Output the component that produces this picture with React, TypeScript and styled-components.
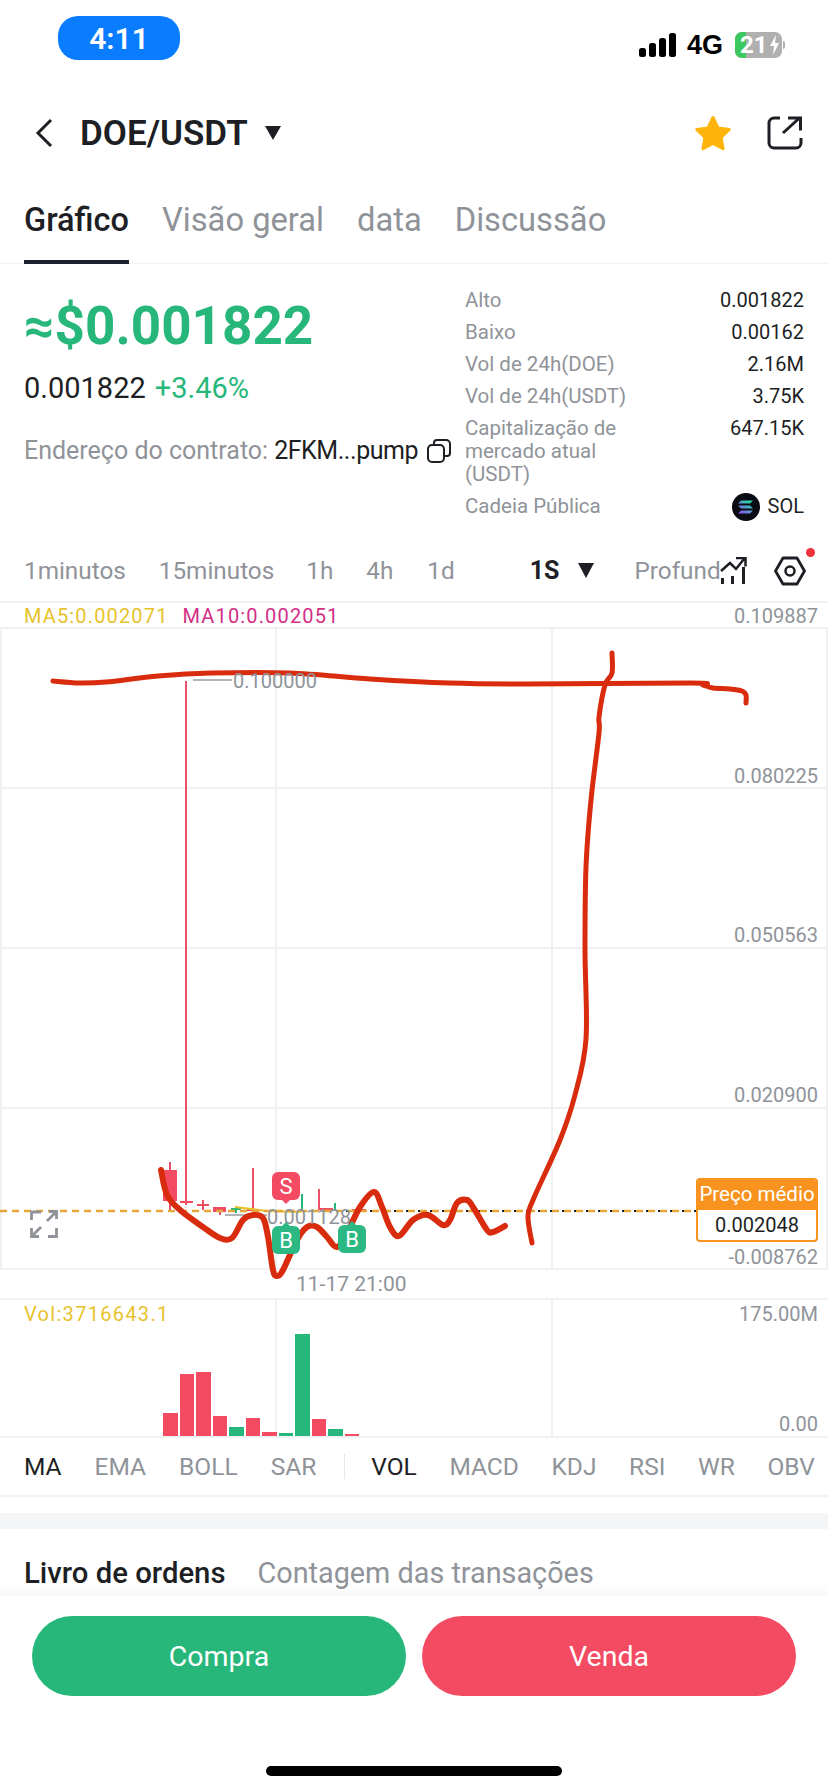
import styled, { createGlobalStyle } from "styled-components";

const GREEN = "#27b77b";
const RED = "#f34b62";
const GRAY = "#8f9399";
const INK = "#1d1f24";
const SANS = `Roboto, "Noto Sans", sans-serif`;

const GlobalStyle = createGlobalStyle`
  html, body {
    margin: 0;
    padding: 0;
    background: #fff;
  }
  body {
    font-family: ${SANS};
    color: ${INK};
  }
  * {
    box-sizing: border-box;
  }
`;

const stats = [
  { label: "Alto", value: "0.001822" },
  { label: "Baixo", value: "0.00162" },
  { label: "Vol de 24h(DOE)", value: "2.16M" },
  { label: "Vol de 24h(USDT)", value: "3.75K" },
  { label: "Capitalização de mercado atual (USDT)", value: "647.15K" },
];

const volumes = [
  { h: 23, up: false },
  { h: 62, up: false },
  { h: 64, up: false },
  { h: 20, up: false },
  { h: 9, up: true },
  { h: 18, up: false },
  { h: 4, up: false },
  { h: 3, up: true },
  { h: 102, up: true },
  { h: 17, up: false },
  { h: 7, up: true },
  { h: 2, up: false },
];

const topStroke: number[][] = [
  [53, 681], [79, 683], [106, 682], [158, 676], [211, 673], [290, 673], [370, 679],
  [449, 683], [528, 684], [692, 683], [703, 685], [713, 688], [730, 689], [742, 691], [746, 695], [746, 703],
];
const tallStroke: number[][] = [
  [612, 653], [612, 673], [605, 685], [599, 717], [599, 733], [591, 800], [586, 867],
  [585, 950], [586, 1039], [575, 1095], [560, 1140], [533, 1200], [528, 1217], [532, 1243],
];
const lowStroke: number[][] = [
  [161, 1170], [167, 1195], [180, 1210], [203, 1227], [220, 1238], [232, 1238], [243, 1220],
  [253, 1215], [263, 1218], [268, 1237], [273, 1270], [277, 1276], [283, 1270], [297, 1240],
  [307, 1227], [317, 1227], [327, 1237], [337, 1247], [347, 1233], [360, 1207], [374, 1192],
  [382, 1207], [390, 1227], [399, 1236], [413, 1220], [428, 1215], [443, 1225], [450, 1220],
  [457, 1203], [467, 1200], [473, 1207], [487, 1230], [493, 1232], [505, 1226],
];

// catmull-rom through the hand drawn points
const smooth = (pts: number[][]) => {
  let d = `M${pts[0][0]} ${pts[0][1]}`;
  for (let i = 0; i < pts.length - 1; i++) {
    const a = pts[Math.max(i - 1, 0)];
    const b = pts[i];
    const c = pts[i + 1];
    const e = pts[Math.min(i + 2, pts.length - 1)];
    const c1x = b[0] + (c[0] - a[0]) / 6;
    const c1y = b[1] + (c[1] - a[1]) / 6;
    const c2x = c[0] - (e[0] - b[0]) / 6;
    const c2y = c[1] - (e[1] - b[1]) / 6;
    d += ` C${c1x} ${c1y} ${c2x} ${c2y} ${c[0]} ${c[1]}`;
  }
  return d;
};

function App() {
  return (
    <Page>
      <GlobalStyle />
      <StatusBar>
        <TimePill>4:11</TimePill>
        <StatusRight>
          <svg width="37" height="24" viewBox="0 0 37 24">
            <rect x="0" y="15" width="7" height="9" rx="2.5" fill="#000" />
            <rect x="10" y="10" width="7" height="14" rx="2.5" fill="#000" />
            <rect x="20" y="5" width="7" height="19" rx="2.5" fill="#000" />
            <rect x="30" y="0" width="7" height="24" rx="2.5" fill="#000" />
          </svg>
          <NetLabel>4G</NetLabel>
          <Battery>
            <BatteryFill />
            <BatteryText>21</BatteryText>
            <svg width="11" height="20" viewBox="0 0 11 20">
              <path d="M7 0 1 11h4l-1 9 6-12H6z" fill="#fff" />
            </svg>
            <BatteryCap />
          </Battery>
        </StatusRight>
      </StatusBar>

      <NavBar>
        <NavLeft>
          <svg width="18" height="30" viewBox="0 0 18 30">
            <path d="M16 2 3 15l13 13" fill="none" stroke={INK} strokeWidth="3" />
          </svg>
          <PairTitle>DOE/USDT</PairTitle>
          <Caret $size={14} $color={INK} />
        </NavLeft>
        <NavRight>
          <svg width="38" height="36" viewBox="0 0 38 36">
            <path
              d="M19 2.5l5 10.4 11.3 1.6-8.2 8 2 11.3L19 28.4 8.900 33.800l2-11.300-8.200-8L14 12.900z"
              fill="#ffb40a"
              stroke="#ffb40a"
              strokeWidth="3"
              strokeLinejoin="round"
            />
          </svg>
          <svg width="36" height="34" viewBox="0 0 36 34">
            <path
              d="M13 2H7a5 5 0 0 0-5 5v20a5 5 0 0 0 5 5h22a5 5 0 0 0 5-5v-5"
              fill="none"
              stroke={INK}
              strokeWidth="3"
            />
            <path d="M16 17 33 1.500M21 2h12.500v12.500" fill="none" stroke={INK} strokeWidth="3" />
          </svg>
        </NavRight>
      </NavBar>

      <TabRow>
        <Tab $active>Gráfico</Tab>
        <Tab>Visão geral</Tab>
        <Tab>data</Tab>
        <Tab>Discussão</Tab>
      </TabRow>

      <Summary>
        <PriceColumn>
          <BigPrice>≈$0.001822</BigPrice>
          <PriceLine>
            <span>0.001822</span>
            <Change>+3.46%</Change>
          </PriceLine>
          <ContractLine>
            <span>Endereço do contrato:</span>
            <ContractValue>2FKM...pump</ContractValue>
            <svg width="24" height="24" viewBox="0 0 24 24">
              <rect x="1" y="6" width="16" height="17" rx="4" fill="none" stroke={INK} strokeWidth="2" />
              <path d="M7 5V4a3 3 0 0 1 3-3h9a4 4 0 0 1 4 4v9a3 3 0 0 1-3 3h-3" fill="none" stroke={INK} strokeWidth="2" />
            </svg>
          </ContractLine>
        </PriceColumn>
        <StatsColumn>
          {stats.map((s) => (
            <StatRow key={s.label}>
              <StatLabel>{s.label}</StatLabel>
              <StatValue>{s.value}</StatValue>
            </StatRow>
          ))}
          <StatRow>
            <StatLabel>Cadeia Pública</StatLabel>
            <ChainValue>
              <svg width="28" height="28" viewBox="0 0 28 28">
                <circle cx="14" cy="14" r="14" fill="#0b0b14" />
                <defs>
                  <linearGradient id="sol-gradient" x1="0" y1="1" x2="1" y2="0">
                    <stop offset="0%" stopColor="#9945ff" />
                    <stop offset="100%" stopColor="#14f195" />
                  </linearGradient>
                </defs>
                <path
                  d="M9 7.500h12l-3 3H6zM6 12.500h12l3 3H9zM9 17.500h12l-3 3H6z"
                  fill="url(#sol-gradient)"
                />
              </svg>
              <StatValue>SOL</StatValue>
            </ChainValue>
          </StatRow>
        </StatsColumn>
      </Summary>

      <TimeframeRow>
        <Timeframe $left={24}>1minutos</Timeframe>
        <Timeframe $left={33}>15minutos</Timeframe>
        <Timeframe $left={32}>1h</Timeframe>
        <Timeframe $left={33}>4h</Timeframe>
        <Timeframe $left={34}>1d</Timeframe>
        <ActiveFrame>1S</ActiveFrame>
        <Caret $size={15} $color={INK} />
        <DepthLabel>Profund</DepthLabel>
        <DepthIcon width="28" height="28" viewBox="0 0 28 28">
          <path d="M1 14 10 6l6 6 8-10M16 1h9.500v8.500" fill="none" stroke={INK} strokeWidth="2.500" />
          <path d="M2.500 21v6M12.500 19v8M23.500 10v17" fill="none" stroke={INK} strokeWidth="3" />
        </DepthIcon>
        <SettingsWrap>
          <svg width="32" height="30" viewBox="0 0 32 30">
            <path
              d="M9 2h14l7.500 13L23 28H9L1.500 15z"
              fill="none"
              stroke={INK}
              strokeWidth="2.800"
              strokeLinejoin="round"
            />
            <circle cx="16" cy="15" r="4.500" fill="none" stroke={INK} strokeWidth="2.500" />
          </svg>
          <RedDot />
        </SettingsWrap>
      </TimeframeRow>

      <MaRow>
        <MaValue $color="#e8c22c">MA5:0.002071</MaValue>
        <MaValue $color="#d22f86">MA10:0.002051</MaValue>
        <ScaleTop>0.109887</ScaleTop>
      </MaRow>

      <ChartPanel>
        <ChartSvg viewBox="0 628 828 640">
          <g stroke="#eef0f3" strokeWidth="2" fill="none">
            <path d="M1 628V1268M276 628V1268M552 628V1268M827 628V1268" />
            <path d="M0 628H828M0 788H828M0 948H828M0 1108H828" />
          </g>

          <g stroke="#e9506a" strokeWidth="2" fill="none">
            <path d="M170 1162V1210M186 681V1205M203 1200V1210M220 1212V1215M253 1168V1210M319 1189V1210" />
          </g>
          <g fill={RED}>
            <rect x="163" y="1170" width="14" height="31" />
            <rect x="180" y="1201" width="13" height="2" />
            <rect x="197" y="1204" width="12" height="2" />
            <rect x="213" y="1207" width="13" height="5" />
            <rect x="247" y="1209" width="13" height="2" />
            <rect x="319" y="1208" width="14" height="2" />
            <rect x="352" y="1209" width="14" height="2" />
          </g>
          <path d="M236 1206V1213M231 1209H241M302 1194V1210M335 1203V1211" stroke={GREEN} strokeWidth="2" fill="none" />
          <path d="M235 1207 267 1211 300 1212" stroke="#e8c22c" strokeWidth="2" fill="none" />
          <path d="M193 680H232M225 1215H267" stroke="#9a9da3" strokeWidth="1.500" fill="none" />

          <path d="M340 1211H696" stroke="#1d1f24" strokeWidth="2" strokeDasharray="5 7" strokeDashoffset="6" fill="none" />
          <path d="M0 1211H696" stroke="#e7a63a" strokeWidth="2.500" strokeDasharray="7 5" fill="none" />

          <g stroke="#d92c0e" fill="none" strokeLinecap="round" strokeLinejoin="round">
            <path d={smooth(topStroke)} strokeWidth="5" />
            <path d={smooth(tallStroke)} strokeWidth="5" />
            <path d={smooth(lowStroke)} strokeWidth="6" />
          </g>
        </ChartSvg>

        <ScaleLabel $top={136}>0.080225</ScaleLabel>
        <ScaleLabel $top={295}>0.050563</ScaleLabel>
        <ScaleLabel $top={455}>0.020900</ScaleLabel>
        <ScaleLabel $top={617}>-0.008762</ScaleLabel>

        <PriceTag $left={233} $top={41}>0.100000</PriceTag>
        <PriceTag $left={267} $top={577}>0.001128</PriceTag>

        <TradeMark $left={272} $top={544} $color={RED} $tip="down">S</TradeMark>
        <TradeMark $left={272} $top={598} $color="#2cb883" $tip="up">B</TradeMark>
        <TradeMark $left={338} $top={597} $color="#2cb883" $tip="up">B</TradeMark>

        <ExpandIcon width="28" height="28" viewBox="0 0 28 28">
          <path
            d="M1.500 10V2H11M17 11 26 2M19 1.500h7.500V9M2 26l9-9M1.500 18v8.500H9M18 26.500h8.500V18"
            fill="none"
            stroke={GRAY}
            strokeWidth="2.800"
          />
        </ExpandIcon>

        <AvgBox>
          <AvgHead>Preço médio</AvgHead>
          <AvgBody>0.002048</AvgBody>
        </AvgBox>
      </ChartPanel>

      <TimeAxis>11-17 21:00</TimeAxis>

      <VolumePanel>
        <VolLegend>
          <VolLabel>Vol:3716643.1</VolLabel>
          <VolScale>175.00M</VolScale>
        </VolLegend>
        <VolZero>0.00</VolZero>
        <GridLine $left={276} />
        <GridLine $left={552} />
        <VolBars>
          {volumes.map((v, i) => (
            <VolBar key={i} $up={v.up} style={{ height: v.h }} />
          ))}
        </VolBars>
      </VolumePanel>

      <IndicatorRow>
        <IndicatorGroup>
          <Indicator $active>MA</Indicator>
          <Indicator>EMA</Indicator>
          <Indicator>BOLL</Indicator>
          <Indicator>SAR</Indicator>
        </IndicatorGroup>
        <IndicatorDivider />
        <IndicatorGroup>
          <Indicator $active>VOL</Indicator>
          <Indicator>MACD</Indicator>
          <Indicator>KDJ</Indicator>
          <Indicator>RSI</Indicator>
          <Indicator>WR</Indicator>
          <Indicator>OBV</Indicator>
        </IndicatorGroup>
      </IndicatorRow>

      <SectionBand />

      <OrderTabs>
        <OrderTab $active>Livro de ordens</OrderTab>
        <OrderTab>Contagem das transações</OrderTab>
      </OrderTabs>

      <ActionBar>
        <ActionButton $color={GREEN}>Compra</ActionButton>
        <ActionButton $color={RED}>Venda</ActionButton>
      </ActionBar>

      <HomeBar />
    </Page>
  );
}

const Page = styled.div`
  width: 828px;
  height: 1792px;
  background: #fff;
  overflow: hidden;
  display: flex;
  flex-direction: column;
`;

const StatusBar = styled.div`
  height: 86px;
  flex: none;
  display: flex;
  justify-content: space-between;
  align-items: flex-start;
  padding: 16px 46px 0 58px;
`;

const TimePill = styled.div`
  width: 122px;
  height: 44px;
  border-radius: 20px;
  background: #0a7cff;
  color: #fff;
  font-size: 30px;
  font-weight: 600;
  display: flex;
  align-items: center;
  justify-content: center;
`;

const StatusRight = styled.div`
  display: flex;
  align-items: center;
  margin-top: 16px;
  gap: 11px;
`;

const NetLabel = styled.span`
  margin-right: 1px;
  font-family: "Liberation Sans", sans-serif;
  font-size: 27px;
  font-weight: 700;
  color: #000;
  line-height: 24px;
`;

const Battery = styled.div`
  position: relative;
  width: 47px;
  height: 26px;
  border-radius: 7px;
  background: #b0b0b0;
  display: flex;
  align-items: center;
  padding-left: 5px;
  gap: 1px;
`;

const BatteryFill = styled.div`
  position: absolute;
  left: 0;
  top: 0;
  bottom: 0;
  width: 11px;
  border-radius: 7px 0 0 7px;
  background: #3dc85f;
`;

const BatteryText = styled.span`
  position: relative;
  color: #fff;
  font-size: 24px;
  line-height: 26px;
  font-weight: 700;
`;

const BatteryCap = styled.div`
  position: absolute;
  right: -3px;
  top: 9px;
  width: 2px;
  height: 8px;
  border-radius: 0 2px 2px 0;
  background: #b0b0b0;
`;

const NavBar = styled.div`
  height: 94px;
  flex: none;
  padding: 0 25px 0 35px;
  display: flex;
  justify-content: space-between;
  align-items: center;
`;

const NavLeft = styled.div`
  display: flex;
  align-items: center;
`;

const PairTitle = styled.span`
  margin: 0 17px 0 27px;
  font-size: 35px;
  font-weight: 600;
  color: ${INK};
`;

const NavRight = styled.div`
  display: flex;
  align-items: center;
  gap: 35px;
`;

const Caret = styled.span<{ $size: number; $color: string }>`
  width: 0;
  height: 0;
  border-left: ${(p) => p.$size / 2 + 1}px solid transparent;
  border-right: ${(p) => p.$size / 2 + 1}px solid transparent;
  border-top: ${(p) => p.$size}px solid ${(p) => p.$color};
`;

const TabRow = styled.div`
  height: 84px;
  flex: none;
  padding: 0 24px;
  display: flex;
  gap: 33px;
  border-bottom: 1px solid #f1f2f4;
`;

const Tab = styled.div<{ $active?: boolean }>`
  height: 84px;
  padding-top: 21px;
  font-size: ${(p) => (p.$active ? 32.5 : 32.7)}px;
  font-weight: ${(p) => (p.$active ? 500 : 400)};
  line-height: 38px;
  color: ${(p) => (p.$active ? INK : GRAY)};
  border-bottom: 4px solid ${(p) => (p.$active ? "#1d2030" : "transparent")};
`;

const Summary = styled.div`
  height: 276px;
  flex: none;
  padding: 20px 24px 0;
  display: flex;
  justify-content: space-between;
`;

const PriceColumn = styled.div`
  width: 428px;
  display: flex;
  flex-direction: column;
`;

const BigPrice = styled.div`
  margin-top: 11px;
  font-size: 53px;
  line-height: 62px;
  font-weight: 700;
  color: ${GREEN};
`;

const PriceLine = styled.div`
  margin-top: 15px;
  font-size: 29px;
  line-height: 32px;
  font-weight: 400;
  display: flex;
  gap: 9px;
`;

const Change = styled.span`
  color: ${GREEN};
`;

const ContractLine = styled.div`
  margin-top: 32px;
  font-size: 25px;
  line-height: 30px;
  color: ${GRAY};
  display: flex;
  align-items: center;
  white-space: nowrap;
`;

const ContractValue = styled.span`
  color: ${INK};
  margin: 0 9px 0 6px;
  letter-spacing: -0.45px;
`;

const StatsColumn = styled.div`
  width: 339px;
  padding-top: 5px;
  display: flex;
  flex-direction: column;
  gap: 9px;
`;

const StatRow = styled.div`
  display: flex;
  justify-content: space-between;
  align-items: flex-start;
`;

const StatLabel = styled.div`
  width: 180px;
  font-size: 20.5px;
  line-height: 23px;
  color: ${GRAY};
`;

const StatValue = styled.div`
  font-size: 20px;
  line-height: 23px;
  color: ${INK};
`;

const ChainValue = styled.div`
  display: flex;
  align-items: center;
  gap: 8px;
  height: 23px;
`;

const TimeframeRow = styled.div`
  height: 63px;
  flex: none;
  display: flex;
  align-items: center;
  border-bottom: 2px solid #f1f2f4;
`;

const Timeframe = styled.span<{ $left: number }>`
  margin-left: ${(p) => p.$left}px;
  font-size: 24.3px;
  color: ${GRAY};
`;

const ActiveFrame = styled.span`
  margin: 0 19px 0 75px;
  font-size: 25px;
  font-weight: 700;
  color: ${INK};
`;

const DepthLabel = styled.span`
  margin-left: 40px;
  white-space: nowrap;
  font-size: 24.3px;
  color: ${GRAY};
`;

const DepthIcon = styled.svg`
  margin-left: -1px;
`;

const SettingsWrap = styled.div`
  position: relative;
  margin-left: 26px;
  height: 30px;
`;

const RedDot = styled.span`
  position: absolute;
  top: -8px;
  right: -9px;
  width: 9px;
  height: 9px;
  border-radius: 50%;
  background: #f0323c;
`;

const MaRow = styled.div`
  height: 25px;
  flex: none;
  padding: 0 10px 0 24px;
  display: flex;
  align-items: center;
  gap: 14px;
  font-size: 20px;
`;

const MaValue = styled.span<{ $color: string }>`
  color: ${(p) => p.$color};
  letter-spacing: 1.15px;
`;

const ScaleTop = styled.span`
  margin-left: auto;
  color: ${GRAY};
`;

const ChartPanel = styled.div`
  position: relative;
  height: 640px;
  flex: none;
`;

const ChartSvg = styled.svg`
  position: absolute;
  left: 0;
  top: 0;
  width: 828px;
  height: 640px;
  overflow: visible;
`;

const ScaleLabel = styled.span<{ $top: number }>`
  position: absolute;
  right: 10px;
  top: ${(p) => p.$top}px;
  font-size: 20px;
  line-height: 24px;
  color: ${GRAY};
`;

const PriceTag = styled.span<{ $left: number; $top: number }>`
  position: absolute;
  left: ${(p) => p.$left}px;
  top: ${(p) => p.$top}px;
  font-size: 20px;
  line-height: 24px;
  color: ${GRAY};
`;

const TradeMark = styled.span<{ $left: number; $top: number; $color: string; $tip: "up" | "down" }>`
  position: absolute;
  left: ${(p) => p.$left}px;
  top: ${(p) => p.$top}px;
  width: 28px;
  height: 28px;
  border-radius: 6px;
  background: ${(p) => p.$color};
  color: #fff;
  font-size: 22px;
  font-weight: 400;
  display: flex;
  align-items: center;
  justify-content: center;

  &::after {
    content: "";
    position: absolute;
    left: 10px;
    ${(p) => (p.$tip === "down" ? "bottom: -4px;" : "top: -4px;")}
    border-left: 4px solid transparent;
    border-right: 4px solid transparent;
    ${(p) =>
      p.$tip === "down" ? `border-top: 4px solid ${p.$color};` : `border-bottom: 4px solid ${p.$color};`}
  }
`;

const ExpandIcon = styled.svg`
  position: absolute;
  left: 30px;
  top: 582px;
`;

const AvgBox = styled.div`
  position: absolute;
  left: 696px;
  top: 550px;
  width: 122px;
  height: 64px;
  border: 2px solid #f7931e;
  border-radius: 4px;
  overflow: hidden;
  background: #fff;
`;

const AvgHead = styled.div`
  height: 30px;
  background: #f7931e;
  color: #fff;
  font-size: 20.5px;
  line-height: 28px;
  text-align: center;
  white-space: nowrap;
`;

const AvgBody = styled.div`
  font-size: 20px;
  line-height: 30px;
  text-align: center;
  color: ${INK};
`;

const TimeAxis = styled.div`
  height: 32px;
  flex: none;
  padding-left: 296px;
  font-size: 21px;
  line-height: 28px;
  color: ${GRAY};
  border-top: 2px solid #f1f2f4;
  border-bottom: 2px solid #f1f2f4;
`;

const VolumePanel = styled.div`
  position: relative;
  height: 138px;
  flex: none;
  border-bottom: 2px solid #f1f2f4;
`;

const VolLegend = styled.div`
  display: flex;
  justify-content: space-between;
  padding: 2px 10px 0 24px;
  font-size: 20px;
  line-height: 24px;
`;

const VolLabel = styled.span`
  color: #e8c22c;
  letter-spacing: 1.3px;
`;

const VolScale = styled.span`
  color: ${GRAY};
`;

const VolZero = styled.span`
  position: absolute;
  right: 10px;
  bottom: 0;
  font-size: 20px;
  line-height: 24px;
  color: ${GRAY};
`;

const GridLine = styled.span<{ $left: number }>`
  position: absolute;
  left: ${(p) => p.$left - 1}px;
  top: 0;
  bottom: 0;
  width: 2px;
  background: #eef0f3;
`;

const VolBars = styled.div`
  position: absolute;
  left: 163px;
  bottom: 0;
  display: flex;
  align-items: flex-end;
  gap: 2px;
`;

const VolBar = styled.span<{ $up: boolean }>`
  width: 14.5px;
  background: ${(p) => (p.$up ? GREEN : RED)};
`;

const IndicatorRow = styled.div`
  height: 59px;
  flex: none;
  padding: 0 13px 0 24px;
  display: flex;
  align-items: center;
  border-bottom: 2px solid #f1f2f4;
`;

const IndicatorGroup = styled.div`
  display: flex;
  align-items: center;
  gap: 33px;
  &:last-child {
    flex: 1;
    justify-content: space-between;
    gap: 0;
  }
`;

const Indicator = styled.span<{ $active?: boolean }>`
  font-size: 24.5px;
  color: ${(p) => (p.$active ? INK : GRAY)};
`;

const IndicatorDivider = styled.span`
  width: 1px;
  height: 25px;
  margin: 0 26px 0 28px;
  background: #e6e7ea;
`;

const SectionBand = styled.div`
  height: 16px;
  margin-top: 16px;
  background: #f4f5f7;
  flex: none;
`;

const OrderTabs = styled.div`
  height: 67px;
  flex: none;
  padding: 27px 24px 0;
  display: flex;
  gap: 32px;
  background: linear-gradient(#fff 80%, #f6f7f9);
`;

const OrderTab = styled.span<{ $active?: boolean }>`
  font-size: ${(p) => (p.$active ? 29.3 : 28.8)}px;
  font-weight: ${(p) => (p.$active ? 500 : 400)};
  line-height: 34px;
  color: ${(p) => (p.$active ? INK : GRAY)};
`;

const ActionBar = styled.div`
  padding: 20px 32px 0;
  flex: none;
  display: flex;
  gap: 16px;
`;

const ActionButton = styled.button<{ $color: string }>`
  flex: 1;
  height: 80px;
  border: none;
  border-radius: 40px;
  background: ${(p) => p.$color};
  color: #fff;
  font-family: ${SANS};
  font-size: 28.5px;
  font-weight: 400;
`;

const HomeBar = styled.div`
  width: 296px;
  height: 10px;
  margin: 70px auto 0;
  border-radius: 5px;
  background: #000;
  flex: none;
`;

export default App;
